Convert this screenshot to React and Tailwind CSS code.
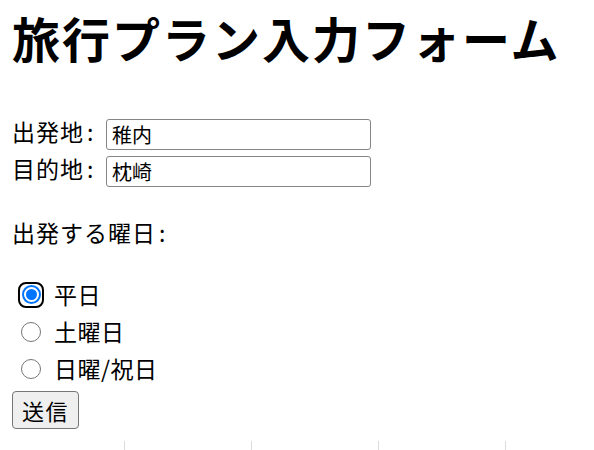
import React from "react";

function Radio({ checked }) {
  if (checked) {
    return (
      <span className="flex h-[26px] w-[26px] items-center justify-center rounded-[8px] border-[2.5px] border-black bg-white">
        <span className="flex h-[19px] w-[19px] items-center justify-center rounded-full border-[2px] border-[#0075ff] bg-white">
          <span className="h-[11px] w-[11px] rounded-full bg-[#0075ff]" />
        </span>
      </span>
    );
  }
  return (
    <span className="flex h-[26px] w-[26px] items-center justify-center">
      <span className="h-[20px] w-[20px] rounded-full border-[1.5px] border-[#767676] bg-white" />
    </span>
  );
}

export default function App() {
  const options = [
    { label: "平日", checked: true },
    { label: "土曜日", checked: false },
    { label: "日曜/祝日", checked: false },
  ];
  return (
    <div className="min-h-[450px] w-[594px] overflow-hidden bg-white text-black font-['Noto_Sans_CJK_JP','Noto_Sans',sans-serif]">
      <div className="pl-[12px]">
        <h1 className="mt-[9px] text-[48px] font-bold leading-[56px] tracking-[2px]">
          旅行プラン入力フォーム
        </h1>

        <form className="mt-[54px]" onSubmit={(e) => e.preventDefault()}>
          <div className="flex flex-col gap-[6px]">
            <div className="flex items-start">
              <label className="w-[94px] text-[23px] leading-[24px] tracking-[1px]">出発地<span className="ml-[3px]">:</span></label>
              <input
                type="text"
                defaultValue="稚内"
                className="h-[31px] w-[265px] rounded-[3px] border-[1.5px] border-[#858585] px-[5px] text-[20px] outline-none"
              />
            </div>
            <div className="flex items-start">
              <label className="w-[94px] text-[23px] leading-[24px] tracking-[1px]">目的地<span className="ml-[3px]">:</span></label>
              <input
                type="text"
                defaultValue="枕崎"
                className="h-[31px] w-[265px] rounded-[3px] border-[1.5px] border-[#858585] px-[5px] text-[20px] outline-none"
              />
            </div>
          </div>

          <p className="mt-[33px] text-[23px] leading-[24px] tracking-[1px]">出発する曜日<span className="ml-[3px]">:</span></p>

          <div className="mt-[32px] flex flex-col">
            {options.map((o) => (
              <label key={o.label} className="flex h-[37px] items-center">
                <span className="ml-[6px]">
                  <Radio checked={o.checked} />
                </span>
                <span className="ml-[10px] text-[23px] leading-[37px] tracking-[0.5px]">{o.label}</span>
              </label>
            ))}
          </div>

          <button
            type="submit"
            className="mt-[4px] flex h-[38px] items-center justify-center rounded-[4px] border-[1.5px] border-[#767676] bg-[#efefef] px-[9px] text-[22px] leading-[28px] tracking-[1.5px]"
          >
            送信
          </button>
        </form>
      </div>

      <div className="mt-[12px] flex h-[12px]">
        <div className="w-[125px] border-r border-[#dcdcdc]" />
        <div className="w-[127px] border-r border-[#dcdcdc]" />
        <div className="w-[127px] border-r border-[#dcdcdc]" />
        <div className="w-[127px] border-r border-[#dcdcdc]" />
        <div className="flex-1" />
      </div>
    </div>
  );
}
